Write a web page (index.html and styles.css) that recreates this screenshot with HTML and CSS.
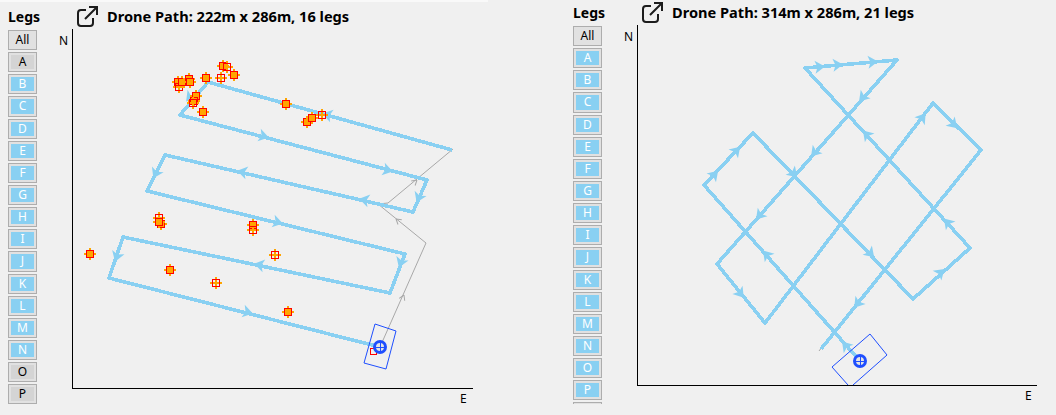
FILE: index.html
```html
<!DOCTYPE html>
<html lang="en">
<head>
  <meta charset="UTF-8">
  <title>Drone Paths</title>
  <link rel="stylesheet" href="styles.css">
</head>
<body>
<div class="page">

  <!-- first flight -->
  <section class="panel panel-first">
    <div class="sidebar">
      <div class="legs-title">Legs</div>
      <div class="leg-list">
        <button class="leg plain">All</button>
        <button class="leg off"><span>A</span></button>
        <button class="leg on"><span>B</span></button>
        <button class="leg on"><span>C</span></button>
        <button class="leg on"><span>D</span></button>
        <button class="leg on"><span>E</span></button>
        <button class="leg on"><span>F</span></button>
        <button class="leg on"><span>G</span></button>
        <button class="leg on"><span>H</span></button>
        <button class="leg on"><span>I</span></button>
        <button class="leg on"><span>J</span></button>
        <button class="leg on"><span>K</span></button>
        <button class="leg on"><span>L</span></button>
        <button class="leg on"><span>M</span></button>
        <button class="leg on"><span>N</span></button>
        <button class="leg off"><span>O</span></button>
        <button class="leg off"><span>P</span></button>
      </div>
    </div>
    <div class="main">
      <div class="header">
        <svg class="open-icon" viewBox="0 0 22 22"><path d="M9 4H4a3 3 0 0 0-3 3V17a3 3 0 0 0 3 3H13a3 3 0 0 0 3-3V12M8 13L20 1M12 1H20V9"/></svg>
        <h2 class="title">Drone Path: 222m x 286m, 16 legs</h2>
      </div>
      <svg class="chart" viewBox="50 29 430 380">
        <defs>
          <path id="arrow" d="M6 0L-4-6.5-1.5 0-4 6.5Z"/>
          <path id="arrow-gray" d="M0 0L-5-3M0 0L-5 3"/>
          <g id="mark">
            <path class="spur" d="M-6 0H6M0-6V6"/>
            <rect class="box" x="-3.5" y="-3.5" width="7" height="7"/>
          </g>
          <g id="mark-open">
            <path class="spur" d="M-6 0H6M0-6V6"/>
            <rect class="box-open" x="-3.5" y="-3.5" width="7" height="7"/>
          </g>
        </defs>

        <path class="axis" d="M72.5 29V388.5H473"/>
        <text class="axis-label" x="59" y="45">N</text>
        <text class="axis-label" x="460" y="403">E</text>

        <path class="gray-path" d="M380 347L426 243 378 204 388 203 453 149"/>
        <use class="gray-head" href="#arrow-gray" transform="translate(404 295) rotate(-66)"/>
        <use class="gray-head" href="#arrow-gray" transform="translate(396 219) rotate(219)"/>
        <use class="gray-head" href="#arrow-gray" transform="translate(417 180) rotate(-40)"/>

        <path class="leg-path" d="M452 150L208 82 180 115 427 180 413 212 165 155 147 191 405 254 390 293 123 237 109 278 380 347"/>
        <g class="heads">
          <use href="#arrow" transform="translate(328 115) rotate(195.6)"/>
          <use href="#arrow" transform="translate(190 97) rotate(130)"/>
          <use href="#arrow" transform="translate(263 136) rotate(14.7)"/>
          <use href="#arrow" transform="translate(387 170) rotate(14.7)"/>
          <use href="#arrow" transform="translate(419 197) rotate(113.6)"/>
          <use href="#arrow" transform="translate(365 200) rotate(193)"/>
          <use href="#arrow" transform="translate(243 172) rotate(193)"/>
          <use href="#arrow" transform="translate(156 173) rotate(116.6)"/>
          <use href="#arrow" transform="translate(277 222) rotate(13.7)"/>
          <use href="#arrow" transform="translate(401 262) rotate(111)"/>
          <use href="#arrow" transform="translate(260 265) rotate(191.8)"/>
          <use href="#arrow" transform="translate(117 256) rotate(108.9)"/>
          <use href="#arrow" transform="translate(247 312) rotate(14.3)"/>
        </g>

        <use href="#mark" x="178" y="82"/>
        <use href="#mark-open" x="179" y="87"/>
        <use href="#mark" x="182" y="82"/>
        <use href="#mark" x="189" y="79"/>
        <use href="#mark" x="190" y="82"/>
        <use href="#mark" x="206" y="78"/>
        <use href="#mark-open" x="221" y="78"/>
        <use href="#mark" x="223" y="66"/>
        <use href="#mark-open" x="227" y="67"/>
        <use href="#mark" x="234" y="75"/>
        <use href="#mark" x="196" y="96"/>
        <use href="#mark" x="194" y="101"/>
        <use href="#mark-open" x="193" y="103"/>
        <use href="#mark" x="203" y="112"/>
        <use href="#mark" x="286" y="104"/>
        <use href="#mark" x="307" y="122"/>
        <use href="#mark" x="312" y="118"/>
        <use href="#mark-open" x="322" y="115"/>
        <use href="#mark" x="90" y="254"/>
        <use href="#mark-open" x="159" y="218"/>
        <use href="#mark" x="161" y="224"/>
        <use href="#mark" x="159" y="222"/>
        <use href="#mark" x="253" y="225"/>
        <use href="#mark-open" x="253" y="230"/>
        <use href="#mark-open" x="275" y="255"/>
        <use href="#mark" x="170" y="270"/>
        <use href="#mark-open" x="216" y="283"/>
        <use href="#mark" x="288" y="312"/>

        <path class="footprint" d="M375 324L396 331 386 369 364 363Z"/>
        <rect class="last-photo" x="370.5" y="348" width="6" height="6"/>
        <g transform="translate(380 347)">
          <circle class="drone" r="5.5"/>
          <path class="drone-cross" d="M-5 0H5M0-5V5"/>
        </g>
      </svg>
    </div>
  </section>

  <!-- second flight -->
  <section class="panel">
    <div class="sidebar">
      <div class="legs-title">Legs</div>
      <div class="leg-list">
        <button class="leg plain">All</button>
        <button class="leg on"><span>A</span></button>
        <button class="leg on"><span>B</span></button>
        <button class="leg on"><span>C</span></button>
        <button class="leg on"><span>D</span></button>
        <button class="leg on"><span>E</span></button>
        <button class="leg on"><span>F</span></button>
        <button class="leg on"><span>G</span></button>
        <button class="leg on"><span>H</span></button>
        <button class="leg on"><span>I</span></button>
        <button class="leg on"><span>J</span></button>
        <button class="leg on"><span>K</span></button>
        <button class="leg on"><span>L</span></button>
        <button class="leg on"><span>M</span></button>
        <button class="leg on"><span>N</span></button>
        <button class="leg on"><span>O</span></button>
        <button class="leg on"><span>P</span></button>
        <button class="leg on"></button>
      </div>
    </div>
    <div class="main">
      <div class="header">
        <svg class="open-icon" viewBox="0 0 22 22"><path d="M9 4H4a3 3 0 0 0-3 3V17a3 3 0 0 0 3 3H13a3 3 0 0 0 3-3V12M8 13L20 1M12 1H20V9"/></svg>
        <h2 class="title">Drone Path: 314m x 286m, 21 legs</h2>
      </div>
      <svg class="chart" viewBox="615 25 430 380">
        <path class="axis" d="M637.5 25V385.5H1037"/>
        <text class="axis-label" x="624" y="41">N</text>
        <text class="axis-label" x="1025" y="400">E</text>

        <path class="gray-path" d="M822 347L819 351"/>
        <path class="leg-path" d="M860 361L704 185 753 133 913 299 970 248 805 68 897 60 717 264 765 323 933 103 981 150 821 349"/>
        <g class="heads">
          <use href="#arrow" transform="translate(846 346) rotate(228.4)"/>
          <use href="#arrow" transform="translate(767 255) rotate(228.4)"/>
          <use href="#arrow" transform="translate(714 175) rotate(-46.7)"/>
          <use href="#arrow" transform="translate(736 151) rotate(-46.7)"/>
          <use href="#arrow" transform="translate(793 173) rotate(46)"/>
          <use href="#arrow" transform="translate(870 253) rotate(46)"/>
          <use href="#arrow" transform="translate(940 273) rotate(-41.8)"/>
          <use href="#arrow" transform="translate(948 223) rotate(227.5)"/>
          <use href="#arrow" transform="translate(867 135) rotate(227.5)"/>
          <use href="#arrow" transform="translate(819 67) rotate(-5)"/>
          <use href="#arrow" transform="translate(837 65) rotate(-5)"/>
          <use href="#arrow" transform="translate(872 62) rotate(-5)"/>
          <use href="#arrow" transform="translate(863 97) rotate(131.4)"/>
          <use href="#arrow" transform="translate(815 152) rotate(131.4)"/>
          <use href="#arrow" transform="translate(760 215) rotate(131.4)"/>
          <use href="#arrow" transform="translate(740 293) rotate(50.9)"/>
          <use href="#arrow" transform="translate(922 118) rotate(-52.6)"/>
          <use href="#arrow" transform="translate(953 124) rotate(44.4)"/>
          <use href="#arrow" transform="translate(858 303) rotate(129)"/>
        </g>

        <path class="footprint" d="M848 385L832 367 870 334 887 355 853 385"/>
        <g transform="translate(860 361)">
          <circle class="drone" r="5.5"/>
          <path class="drone-cross" d="M-5 0H5M0-5V5"/>
        </g>
      </svg>
    </div>
  </section>

</div>
</body>
</html>
```

FILE: styles.css
```css
html, body {
  margin: 0;
  padding: 0;
  height: 100%;
  overflow: hidden;
}
body {
  background-color: #f0f0f0;
  color: #000;
  font-family: "Noto Sans", Arial, sans-serif;
}
.page {
  display: flex;
}
.panel {
  display: flex;
  flex: 1;
  padding-left: 8px;
}
.panel-first {
  flex: none;
  box-sizing: border-box;
  width: 565px;
  padding-top: 4px;
  background: linear-gradient(#f9f9f9, #f9f9f9) no-repeat 0 0 / 488px 2px;
}

/* legs column */
.sidebar {
  flex: none;
  width: 29px;
}
.legs-title {
  height: 26px;
  line-height: 26px;
  font-size: 14px;
  font-weight: bold;
  white-space: nowrap;
}
.leg-list {
  display: flex;
  flex-direction: column;
  gap: 2px;
  height: 378px;
  overflow: hidden;
}
.leg {
  flex: none;
  display: flex;
  box-sizing: border-box;
  width: 29px;
  height: 20.15px;
  margin: 0;
  padding: 2px;
  border: 1px solid #adadad;
  background-color: #e1e1e1;
  font-family: "Noto Sans", Arial, sans-serif;
  font-size: 12px;
  line-height: 14px;
}
.leg span {
  flex: 1;
  text-align: center;
}
.leg.plain {
  justify-content: center;
  align-items: center;
  color: #000;
}
.leg.off span {
  background-color: #d4d4d4;
  color: #000;
}
.leg.on span {
  background-color: #89d0f2;
  color: #fff;
}

/* chart column */
.main {
  display: flex;
  flex-direction: column;
  margin-left: 13px;
}
.header {
  display: flex;
  align-items: center;
  gap: 8px;
  height: 25px;
  padding-left: 27px;
}
.open-icon {
  width: 22px;
  height: 22px;
  flex: none;
}
.open-icon path {
  fill: none;
  stroke: #1c1c1c;
  stroke-width: 2;
}
.title {
  margin: 0;
  font-size: 14.6px;
  font-weight: bold;
  line-height: 25px;
  white-space: nowrap;
}
.chart {
  display: block;
  width: 430px;
  height: 380px;
}
.axis {
  fill: none;
  stroke: #000;
  stroke-width: 1;
  shape-rendering: crispEdges;
}
.axis-label {
  font-family: "Noto Sans", Arial, sans-serif;
  font-size: 12px;
  fill: #000;
}
.leg-path {
  fill: none;
  stroke: #89d0f2;
  stroke-width: 3.6;
  stroke-linejoin: round;
  shape-rendering: crispEdges;
}
.heads {
  fill: #89d0f2;
}
.gray-path {
  fill: none;
  stroke: #a8a8a8;
  stroke-width: 1;
}
.gray-head {
  fill: none;
  stroke: #a8a8a8;
  stroke-width: 1;
}
.spur {
  stroke: #ffa500;
  stroke-width: 2;
  shape-rendering: crispEdges;
}
.box {
  fill: #ffa500;
  stroke: #f00;
  stroke-width: 1.6;
  shape-rendering: crispEdges;
}
.box-open {
  fill: none;
  stroke: #f00;
  stroke-width: 1.6;
  shape-rendering: crispEdges;
}
.footprint {
  fill: none;
  stroke: #1f4fff;
  stroke-width: 1;
}
.last-photo {
  fill: none;
  stroke: #f00;
  stroke-width: 1;
  shape-rendering: crispEdges;
}
.drone {
  fill: #e4e4e4;
  stroke: #1f4fff;
  stroke-width: 3;
}
.drone-cross {
  stroke: #1f4fff;
  stroke-width: 1;
  shape-rendering: crispEdges;
}
```
